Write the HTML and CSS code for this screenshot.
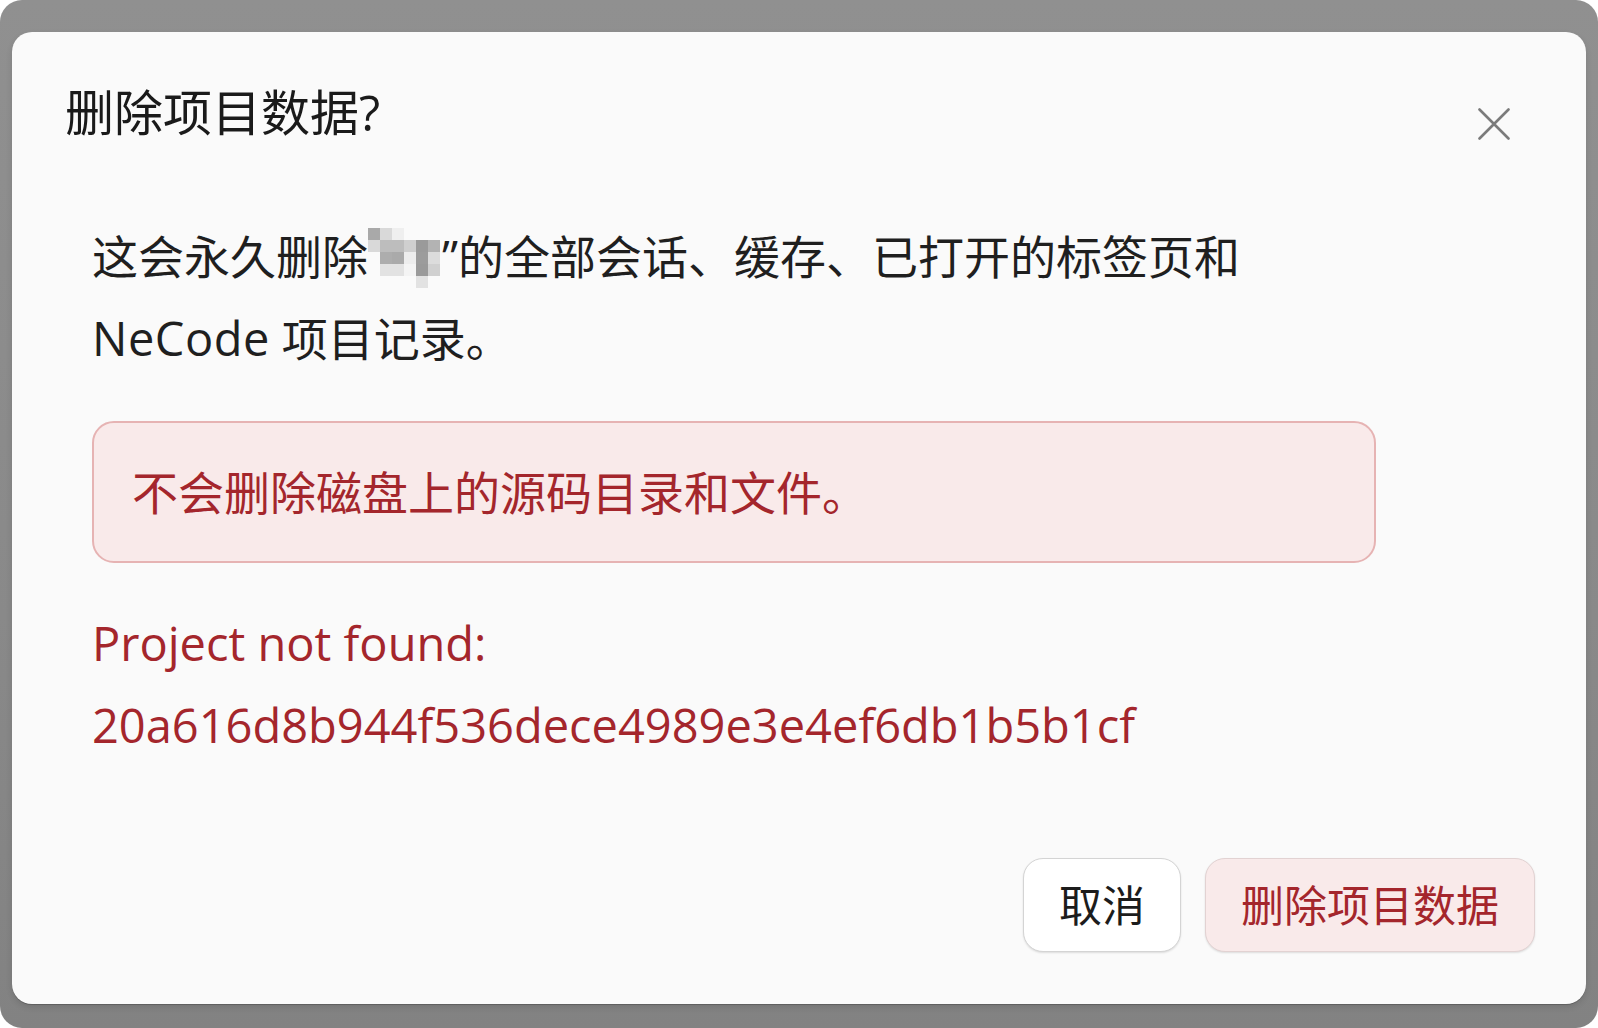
FILE: index.html
```html
<!DOCTYPE html>
<html lang="zh-CN">
<head>
<meta charset="utf-8">
<title>删除项目数据?</title>
<link rel="stylesheet" href="styles.css">
</head>
<body>
<div class="frame">
  <div class="dialog">
    <div class="header">
      <h1 class="title">删除项目数据?</h1>
      <button class="close" aria-label="关闭">
        <svg width="32" height="32" viewBox="0 0 32 32"><path d="M1.5 1.5 L30.5 30.5 M30.5 1.5 L1.5 30.5" stroke="#7b7b7b" stroke-width="2.6" stroke-linecap="round" fill="none"/></svg>
      </button>
    </div>
    <div class="content">
      <p class="desc">这会永久删除<span class="blur"><svg width="72" height="60" viewBox="0 0 6 5" shape-rendering="crispEdges">
        <rect x="0" y="0" width="1" height="1" fill="#a9a9a9"/><rect x="1" y="0" width="1" height="1" fill="#d9d9d9"/><rect x="2" y="0" width="1" height="1" fill="#efefef"/>
        <rect x="0" y="1" width="1" height="1" fill="#d9d9d9"/><rect x="1" y="1" width="1" height="1" fill="#bdbdbd"/><rect x="2" y="1" width="1" height="1" fill="#bdbdbd"/><rect x="3" y="1" width="1" height="1" fill="#cfcfcf"/><rect x="4" y="1" width="1" height="1" fill="#9a9a9a"/><rect x="5" y="1" width="1" height="1" fill="#b3b3b3"/>
        <rect x="1" y="2" width="1" height="1" fill="#adadad"/><rect x="2" y="2" width="1" height="1" fill="#aaaaaa"/><rect x="3" y="2" width="1" height="1" fill="#ededed"/><rect x="4" y="2" width="1" height="1" fill="#9c9c9c"/><rect x="5" y="2" width="1" height="1" fill="#dcdcdc"/>
        <rect x="1" y="3" width="1" height="1" fill="#e2e2e2"/><rect x="2" y="3" width="1" height="1" fill="#e2e2e2"/><rect x="3" y="3" width="1" height="1" fill="#f4f4f4"/><rect x="4" y="3" width="1" height="1" fill="#9a9a9a"/><rect x="5" y="3" width="1" height="1" fill="#d0d0d0"/>
        <rect x="4" y="4" width="1" height="1" fill="#e2e2e2"/>
      </svg></span>”的全部会话、缓存、已打开的标签页和 <span class="latin">NeCode</span> 项目记录。</p>
      <div class="alert">不会删除磁盘上的源码目录和文件。</div>
      <p class="error">Project not found: 20a616d8b944f536dece4989e3e4ef6db1b5b1cf</p>
    </div>
    <div class="footer">
      <button class="btn btn-cancel">取消</button>
      <button class="btn btn-danger">删除项目数据</button>
    </div>
  </div>
</div>
</body>
</html>
```
FILE: styles.css
```css
html, body {
  margin: 0;
  padding: 0;
  background: #ffffff;
}
body {
  font-family: "Open Sans", "Noto Sans CJK SC", sans-serif;
  color: #1c1c1c;
}
.frame {
  box-sizing: border-box;
  width: 1598px;
  height: 1028px;
  padding: 32px 12px 24px 12px;
  border-radius: 22px;
  background: linear-gradient(180deg, #909090 0%, #898989 60%, #828282 100%);
  display: flex;
}
.dialog {
  flex: 1;
  display: flex;
  flex-direction: column;
  background: #fafafa;
  border-radius: 20px;
  box-shadow: 0 1px 0 rgba(0,0,0,0.18), 0 3px 6px rgba(0,0,0,0.12);
  padding: 50px 51px 52px 53px;
}
.header {
  display: flex;
  justify-content: space-between;
  align-items: flex-start;
  height: 60px;
}
.title {
  margin: 0;
  font-size: 49px;
  font-weight: 400;
  line-height: 60px;
  color: #1a1a1a;
}
.close {
  width: 48px;
  height: 48px;
  margin: 18px 17px 0 0;
  padding: 0;
  border: 0;
  background: transparent;
  display: flex;
  align-items: center;
  justify-content: center;
}
.content {
  width: 1284px;
  margin: 73px 0 0 27px;
  font-size: 46px;
  line-height: 82px;
}
.desc {
  margin: 0;
  color: #1f1f1f;
}
.latin {
  font-size: 47px;
  letter-spacing: 0.5px;
}
.blur {
  display: inline-block;
  vertical-align: -14px;
  width: 74px;
  height: 60px;
}
.blur svg {
  display: block;
}
.alert {
  margin-top: 42px;
  border: 2px solid #e6b3b3;
  border-radius: 22px;
  background: #f9eaea;
  padding: 28px 38px;
  color: #a4262c;
}
.error {
  margin: 39px 0 0 0;
  font-size: 47px;
  color: #a4262c;
}
.footer {
  margin-top: auto;
  display: flex;
  justify-content: flex-end;
  gap: 24px;
}
.btn {
  height: 94px;
  padding: 0 35px;
  border-radius: 20px;
  font-family: "Open Sans", "Noto Sans CJK SC", sans-serif;
  font-size: 43px;
  line-height: 1;
  box-shadow: 0 1px 2px rgba(0,0,0,0.12);
}
.btn-cancel {
  background: #ffffff;
  border: 1px solid #d4d4d4;
  color: #1c1c1c;
}
.btn-danger {
  background: #f9eaea;
  border: 1px solid #e2d2d2;
  color: #a4262c;
}
```
